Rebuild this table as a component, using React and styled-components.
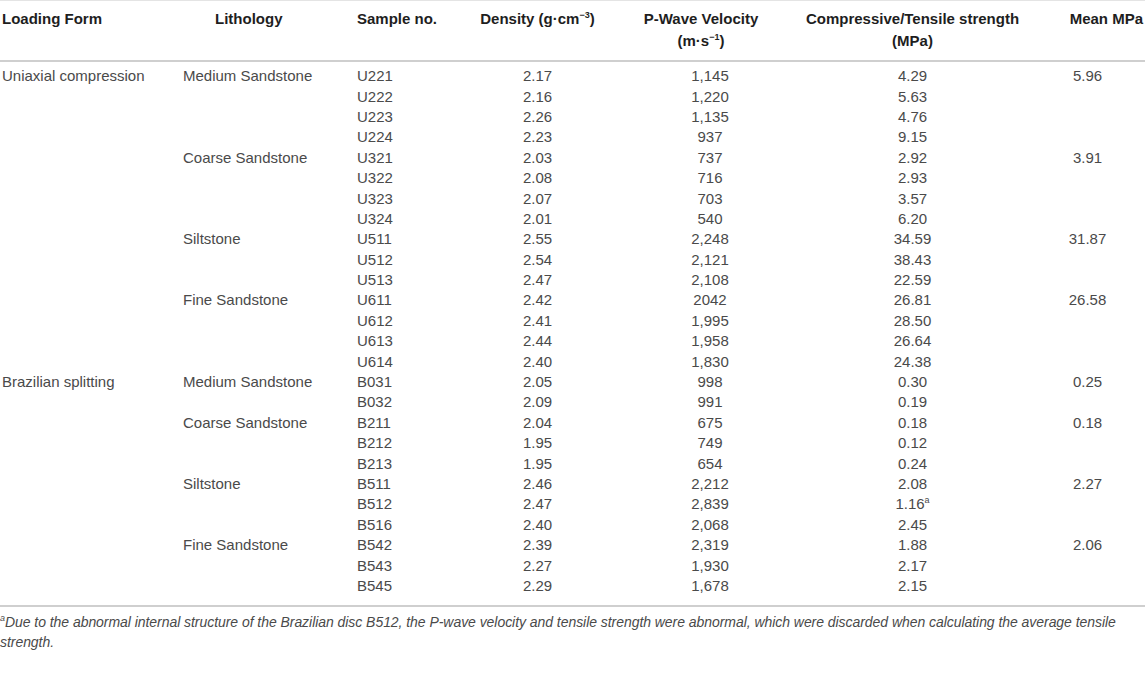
import React from 'react';
import styled, { createGlobalStyle } from 'styled-components';

const GlobalStyle = createGlobalStyle`
  body {
    margin: 0;
    background: #fff;
    font-family: "Liberation Sans", Arial, sans-serif;
  }
`;

const groups = [
  {
    form: 'Uniaxial compression',
    items: [
      {
        lith: 'Medium Sandstone',
        mean: '5.96',
        rows: [
          ['U221', '2.17', '1,145', '4.29'],
          ['U222', '2.16', '1,220', '5.63'],
          ['U223', '2.26', '1,135', '4.76'],
          ['U224', '2.23', '937', '9.15'],
        ],
      },
      {
        lith: 'Coarse Sandstone',
        mean: '3.91',
        rows: [
          ['U321', '2.03', '737', '2.92'],
          ['U322', '2.08', '716', '2.93'],
          ['U323', '2.07', '703', '3.57'],
          ['U324', '2.01', '540', '6.20'],
        ],
      },
      {
        lith: 'Siltstone',
        mean: '31.87',
        rows: [
          ['U511', '2.55', '2,248', '34.59'],
          ['U512', '2.54', '2,121', '38.43'],
          ['U513', '2.47', '2,108', '22.59'],
        ],
      },
      {
        lith: 'Fine Sandstone',
        mean: '26.58',
        rows: [
          ['U611', '2.42', '2042', '26.81'],
          ['U612', '2.41', '1,995', '28.50'],
          ['U613', '2.44', '1,958', '26.64'],
          ['U614', '2.40', '1,830', '24.38'],
        ],
      },
    ],
  },
  {
    form: 'Brazilian splitting',
    items: [
      {
        lith: 'Medium Sandstone',
        mean: '0.25',
        rows: [
          ['B031', '2.05', '998', '0.30'],
          ['B032', '2.09', '991', '0.19'],
        ],
      },
      {
        lith: 'Coarse Sandstone',
        mean: '0.18',
        rows: [
          ['B211', '2.04', '675', '0.18'],
          ['B212', '1.95', '749', '0.12'],
          ['B213', '1.95', '654', '0.24'],
        ],
      },
      {
        lith: 'Siltstone',
        mean: '2.27',
        rows: [
          ['B511', '2.46', '2,212', '2.08'],
          ['B512', '2.47', '2,839', '1.16', 'a'],
          ['B516', '2.40', '2,068', '2.45'],
        ],
      },
      {
        lith: 'Fine Sandstone',
        mean: '2.06',
        rows: [
          ['B542', '2.39', '2,319', '1.88'],
          ['B543', '2.27', '1,930', '2.17'],
          ['B545', '2.29', '1,678', '2.15'],
        ],
      },
    ],
  },
];

const COLS = '180px 170px 110px 155px 190px 225px 115px';

const Wrap = styled.div`
  width: 1145px;
  border-top: 1px solid #e4e4e4;
`;

const HeadRow = styled.div`
  display: grid;
  grid-template-columns: ${COLS};
  height: 61px;
  padding-top: 7px;
  box-sizing: border-box;
  border-bottom: 2px solid #cfcfcf;
`;

const HeadCell = styled.div`
  font-weight: bold;
  font-size: 15px;
  line-height: 22px;
  color: #1e1e1e;
  text-align: ${p => p.align || 'center'};
  padding-left: ${p => p.pl || 0}px;
  padding-right: ${p => p.pr || 0}px;
`;

const Body = styled.div`
  padding: 4px 0 9px;
  border-bottom: 2px solid #cfcfcf;
`;

const Row = styled.div`
  display: grid;
  grid-template-columns: ${COLS};
  height: 20.4px;
  align-items: center;
`;

const Cell = styled.div`
  font-size: 15px;
  line-height: 20px;
  color: #4a4a4a;
  white-space: nowrap;
  text-align: ${p => p.align || 'center'};
  padding-left: ${p => p.pl || 0}px;
  padding-right: ${p => p.pr || 0}px;
`;

const Sup = styled.sup`
  font-size: 9px;
  line-height: 0;
  vertical-align: 6px;
`;

const Note = styled.p`
  margin: 5px 0 0;
  font-size: 14px;
  line-height: 20px;
  letter-spacing: -0.05px;
  font-style: italic;
  color: #4a4a4a;
`;

function DataRows() {
  const out = [];
  groups.forEach((g, gi) => {
    g.items.forEach((it, ii) => {
      it.rows.forEach((r, ri) => {
        const first = ri === 0;
        out.push(
          <Row key={`${gi}-${ii}-${ri}`}>
            <Cell align="left" pl={2}>{first && ii === 0 ? g.form : ''}</Cell>
            <Cell align="left" pl={3}>{first ? it.lith : ''}</Cell>
            <Cell align="left" pl={7}>{r[0]}</Cell>
            <Cell>{r[1]}</Cell>
            <Cell>{r[2]}</Cell>
            <Cell pr={10}>
              {r[3]}
              {r[4] && <Sup>{r[4]}</Sup>}
            </Cell>
            <Cell>{first ? it.mean : ''}</Cell>
          </Row>
        );
      });
    });
  });
  return out;
}

export default function App() {
  return (
    <Wrap>
      <GlobalStyle />
      <HeadRow>
        <HeadCell align="left" pl={2}>Loading Form</HeadCell>
        <HeadCell align="left" pl={35}>Lithology</HeadCell>
        <HeadCell align="left" pl={7}>Sample no.</HeadCell>
        <HeadCell>
          Density (g·cm<Sup>−3</Sup>)
        </HeadCell>
        <HeadCell pr={18}>
          P-Wave Velocity
          <br />
          (m·s<Sup>−1</Sup>)
        </HeadCell>
        <HeadCell pr={10}>
          Compressive/Tensile strength
          <br />
          (MPa)
        </HeadCell>
        <HeadCell align="right" pr={2}>Mean MPa</HeadCell>
      </HeadRow>
      <Body>
        <DataRows />
      </Body>
      <Note>
        <Sup>a</Sup>Due to the abnormal internal structure of the Brazilian disc B512, the P-wave
        velocity and tensile strength were abnormal, which were discarded when calculating the
        average tensile strength.
      </Note>
    </Wrap>
  );
}
